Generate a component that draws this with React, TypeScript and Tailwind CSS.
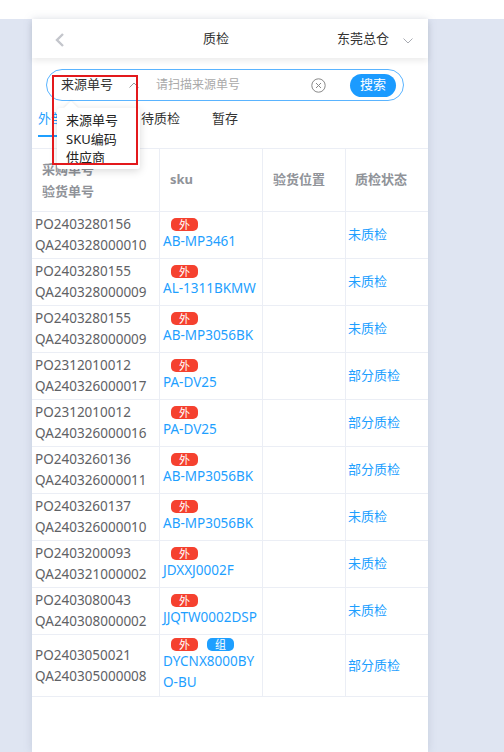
import React from "react";

type Row = { po: string; qa: string; tags: string[]; sku: string; status: string };

const rows: Row[] = [
  { po: "PO2403280156", qa: "QA240328000010", tags: ["外"], sku: "AB-MP3461", status: "未质检" },
  { po: "PO2403280155", qa: "QA240328000009", tags: ["外"], sku: "AL-1311BKMW", status: "未质检" },
  { po: "PO2403280155", qa: "QA240328000009", tags: ["外"], sku: "AB-MP3056BK", status: "未质检" },
  { po: "PO2312010012", qa: "QA240326000017", tags: ["外"], sku: "PA-DV25", status: "部分质检" },
  { po: "PO2312010012", qa: "QA240326000016", tags: ["外"], sku: "PA-DV25", status: "部分质检" },
  { po: "PO2403260136", qa: "QA240326000011", tags: ["外"], sku: "AB-MP3056BK", status: "部分质检" },
  { po: "PO2403260137", qa: "QA240326000010", tags: ["外"], sku: "AB-MP3056BK", status: "未质检" },
  { po: "PO2403200093", qa: "QA240321000002", tags: ["外"], sku: "JDXXJ0002F", status: "未质检" },
  { po: "PO2403080043", qa: "QA240308000002", tags: ["外"], sku: "JJQTW0002DSP", status: "未质检" },
  { po: "PO2403050021", qa: "QA240305000008", tags: ["外", "组"], sku: "DYCNX8000BYO-BU", status: "部分质检" },
];

const font = { fontFamily: "'Noto Sans','Noto Sans CJK SC',sans-serif" };

export default function App() {
  return (
    <div className="min-h-screen bg-[#dfe5f2]" style={font}>
      <div className="relative ml-[32px] w-[396px] pt-0 mt-[19px] min-h-[733px] bg-white shadow-[0_0_8px_rgba(120,130,160,0.25)]">
        {/* header */}
        <div className="relative z-10 flex h-[39px] items-center bg-white shadow-[0_3px_6px_rgba(0,0,0,0.08)]">
          <svg className="absolute left-[23px] top-[14px]" width="10" height="14" viewBox="0 0 10 14">
            <polyline points="8,1 2,7 8,13" fill="none" stroke="#c4c6cc" strokeWidth="2.4" />
          </svg>
          <div className="absolute left-[171px] text-[13px] text-[#333]">质检</div>
          <div className="absolute left-[305px] text-[13px] text-[#333]">东莞总仓</div>
          <svg className="absolute left-[371px] top-[19px]" width="10" height="6" viewBox="0 0 10 6">
            <polyline points="0.5,0.5 5,5 9.5,0.5" fill="none" stroke="#a8abb2" strokeWidth="1" />
          </svg>
        </div>

        {/* search */}
        <div className="pt-[11px] pl-[14px]">
          <div className="relative flex h-[32px] w-[358px] items-center rounded-full border border-[#5ab4ff]">
            <span className="ml-[14px] text-[13px] text-[#333]">来源单号</span>
            <svg className="ml-[16px]" width="10" height="6" viewBox="0 0 10 6">
              <polyline points="0.5,5.5 5,1 9.5,5.5" fill="none" stroke="#999" strokeWidth="1" />
            </svg>
            <span className="ml-[17px] text-[12px] text-[#a9a9a9]">请扫描来源单号</span>
            <svg className="ml-[71px]" width="15" height="15" viewBox="0 0 15 15">
              <circle cx="7.5" cy="7.5" r="6.7" fill="none" stroke="#888" strokeWidth="1" />
              <path d="M5 5 L10 10 M10 5 L5 10" stroke="#888" strokeWidth="1" />
            </svg>
            <div className="ml-[24px] flex h-[23px] w-[46px] items-center justify-center rounded-full bg-[#1b9bff] text-[13px] text-white">
              搜索
            </div>
          </div>
        </div>

        {/* tabs */}
        <div className="flex h-[47px] items-start pt-[6px] text-[13px]">
          <div className="ml-[6px] flex flex-col items-center">
            <span className="leading-[22px] text-[#1e9fff]">外部质检</span>
            <div className="mt-[6px] h-[2px] w-full bg-[#1e9fff]" />
          </div>
          <span className="ml-[51px] leading-[22px] text-[#333]">待质检</span>
          <span className="ml-[32px] leading-[22px] text-[#333]">暂存</span>
        </div>

        {/* table */}
        <div className="grid grid-cols-[128px_103px_83px_82px] border-t border-[#ebeef5] text-[13.5px]">
          <div className="flex h-[63px] flex-col justify-center border-b border-r border-[#ebeef5] pl-[10px] text-[13px] font-bold leading-[22px] text-[#909399]">
            <span>采购单号</span>
            <span>验货单号</span>
          </div>
          <div className="flex h-[63px] items-center border-b border-r border-[#ebeef5] pl-[10px] text-[13px] font-bold text-[#909399]">sku</div>
          <div className="flex h-[63px] items-center border-b border-r border-[#ebeef5] pl-[10px] text-[13px] font-bold text-[#909399]">验货位置</div>
          <div className="flex h-[63px] items-center border-b border-[#ebeef5] pl-[9px] text-[13px] font-bold text-[#909399]">质检状态</div>

          {rows.map((r, i) => (
            <React.Fragment key={i}>
              <div className="flex min-h-[47px] flex-col justify-center border-b border-r border-[#ebeef5] pl-[3px] leading-[21px] text-[#5f6266]">
                <span>{r.po}</span>
                <span>{r.qa}</span>
              </div>
              <div className="flex min-h-[47px] flex-col justify-center border-b border-r border-[#ebeef5] pl-[3px] pr-[2px] py-[3px]">
                <div className="flex gap-[9px] pl-[8px]">
                  {r.tags.map((t) => (
                    <span
                      key={t}
                      className={
                        "flex h-[13px] w-[27px] items-center justify-center rounded-[5px] text-[11px] leading-none text-white " +
                        (t === "外" ? "bg-[#f5412f]" : "bg-[#1e9fff]")
                      }
                    >
                      {t}
                    </span>
                  ))}
                </div>
                <span className="break-all leading-[21px] text-[#1e9fff]">{r.sku}</span>
              </div>
              <div className="min-h-[47px] border-b border-r border-[#ebeef5]" />
              <div className="flex min-h-[47px] items-center border-b border-[#ebeef5] pl-[2px] text-[13px] text-[#1e9fff]">
                {r.status}
              </div>
            </React.Fragment>
          ))}
        </div>

        {/* dropdown */}
        <div className="absolute left-[25px] top-[89px] z-20 h-[61px] w-[83px] rounded-[3px] bg-white pl-[9px] pt-[3px] text-[13px] leading-[18.5px] text-[#222] shadow-[0_2px_8px_rgba(0,0,0,0.15)]">
          <div className="absolute left-[9px] top-[-5px] h-[10px] w-[10px] rotate-45 bg-white shadow-[-1px_-1px_2px_rgba(0,0,0,0.06)]" />
          <div className="relative">来源单号</div>
          <div className="relative">SKU编码</div>
          <div className="relative">供应商</div>
        </div>

        {/* red highlight */}
        <div className="absolute left-[20px] top-[56px] z-30 h-[90px] w-[86px] border-2 border-[#e3191c]" />
      </div>
    </div>
  );
}
